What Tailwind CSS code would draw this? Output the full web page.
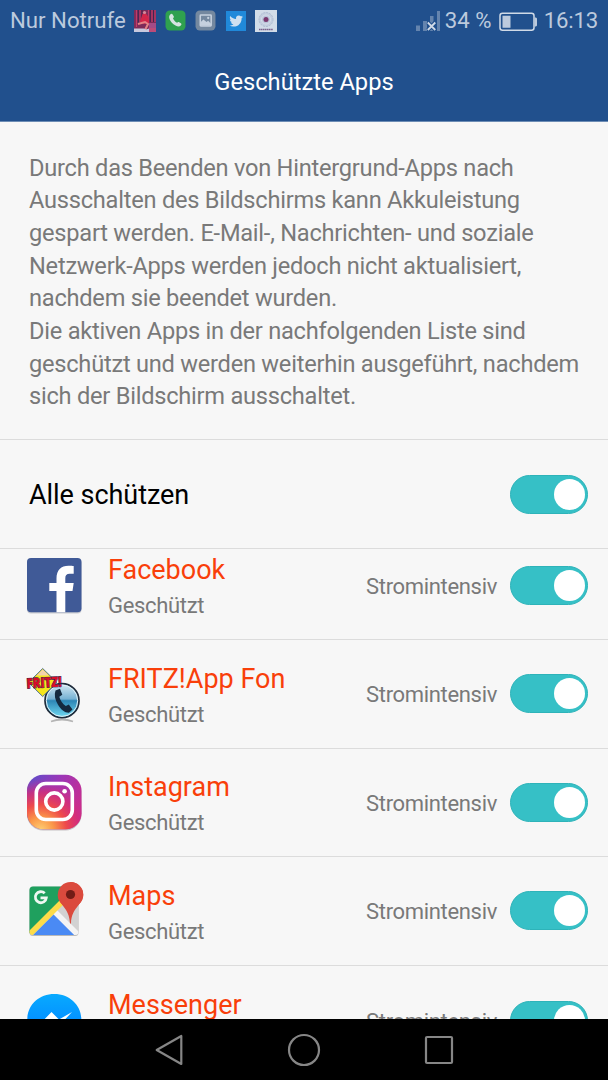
<!DOCTYPE html>
<html lang="de">
<head>
    <meta charset="UTF-8">
    <meta name="viewport" content="width=device-width, initial-scale=1.0">
    <title>Geschützte Apps</title>
    <script src="https://cdn.jsdelivr.net/npm/@tailwindcss/browser@4"></script>
</head>
<body class="font-[Roboto,sans-serif] bg-[#f7f7f7] w-[608px] h-[1080px] overflow-hidden flex flex-col">
    <!-- Header -->
    <header class="h-[122px] shrink-0 bg-[#21508d] border-b border-[#6d8db5]">
        <div class="h-[41px] pl-[10px] pr-[10px] flex items-center text-[22.2px] text-[#bccadd] whitespace-nowrap">
            <span class="w-[124px] pt-px">Nur Notrufe</span>
            <div class="flex items-center gap-[9px]">
                <svg class="w-[22px] h-[22px]" viewBox="0 0 22 22">
                    <path fill="#7d2b59" d="M0 0h22v22H0z"/>
                    <path stroke="#c23a69" stroke-width="1.2" d="M2.5 0v17M6 0v12M14.5 0v12M18 0v12M21 0v12"/>
                    <path stroke="#41264f" stroke-width="1" d="M4.3 0v13M8 0v8M16.3 0v12M19.5 0v12"/>
                    <path fill="#d4264a" d="M8.500 4l3-1 3 4 .5 6-6 1-3-2z"/>
                    <circle cx="10.500" cy="2.500" r="1.600" fill="#d8899a"/>
                    <path fill="none" stroke="#e58386" stroke-width="2" d="M4 14l7-2 3 2-3 6"/>
                    <path fill="#a34b86" d="M15 13h7v5h-7z"/>
                    <path fill="#c8c9de" d="M0 18.500h10l2 1 3-1v3.500H0z"/>
                    <path fill="#bb4b79" d="M15 18h7v4h-7z"/>
                </svg>
                <svg class="w-[21px] h-[21px]" viewBox="0 0 20 20">
                    <rect x=".5" y=".5" width="19" height="19" rx="4" fill="#2fa14f"/>
                    <path fill="#d5e4e1" d="M5 4.200c1-.9 1.700-.7 2.300.2l1 1.600c.4.800.1 1.300-.7 1.900.6 1.800 2 3.300 3.900 4.300.7-.8 1.200-1 2-.5l1.600 1c.8.600.8 1.300-.1 2.100-1.200 1.200-3 1-5-.1-2.700-1.500-4.700-3.700-5.600-6-.7-1.900-.6-3.400.6-4.500z"/>
                </svg>
                <svg class="w-[21px] h-[21px]" viewBox="0 0 20 20">
                    <rect x=".5" y=".5" width="19" height="19" rx="4" fill="#74889f"/>
                    <rect x="5" y="4.800" width="10.400" height="10.400" rx=".6" fill="none" stroke="#c5d0de" stroke-width="1.500"/>
                    <path fill="#c5d0de" d="M5 12l3-3 3 2.500 1.500-1.200 2.800 2.700v2H5z"/>
                    <circle cx="12.600" cy="7.600" r="1.100" fill="#c5d0de"/>
                </svg>
                <svg class="w-[20px] h-[20px] ml-px" viewBox="0 0 20 20">
                    <path fill="#2089da" d="M0 0h20v20H0z"/>
                    <path transform="translate(3.300 3.200) scale(.57)" fill="#cfe0f0" d="M23.950 4.570a10 10 0 01-2.820.770 4.960 4.960 0 002.160-2.720c-.95.550-2 .960-3.130 1.180a4.920 4.920 0 00-8.380 4.480C7.690 8.100 4.070 6.130 1.640 3.160a4.820 4.820 0 00-.67 2.480c0 1.710.87 3.210 2.190 4.100a4.900 4.900 0 01-2.230-.62v.06a4.920 4.920 0 003.950 4.830 5 5 0 01-2.210.080 4.940 4.940 0 004.600 3.420A9.870 9.870 0 010 19.540a13.990 13.990 0 007.550 2.210c9.050 0 14-7.500 14-13.980 0-.210 0-.420-.02-.630a9.940 9.940 0 002.460-2.550z"/>
                </svg>
                <svg class="w-[22px] h-[22px]" viewBox="0 0 22 22">
                    <path fill="#d2dce8" d="M0 0h22v22H0z"/>
                    <circle cx="11" cy="9.500" r="7" fill="#c3cedf" stroke="#aebbd0" stroke-dasharray="2 1"/>
                    <circle cx="11" cy="9.500" r="4.500" fill="#bac5d9" stroke="#d9e0eb"/>
                    <circle cx="11" cy="9.500" r="2.500" fill="#7b396f"/>
                    <path stroke="#79618b" stroke-width="1.600" stroke-dasharray="1.500 .4" d="M4 19.500h14"/>
                </svg>
            </div>
            <svg class="w-[26px] h-[24px] ml-auto -mt-[2px]" viewBox="0 0 26 24">
                <path fill="#6484ae" d="M1 17.500h4V23H1zM8 13h4v10H8zM15 8h3.500v15H15zM22 3h3v20h-3z"/>
                <path stroke="#21508d" stroke-width="4" d="M12.800 14.500l7.500 7.500M20.300 14.500l-7.500 7.500"/>
                <path stroke="#d0dae7" stroke-width="1.800" d="M12.800 14.500l7.500 7.500M20.300 14.500l-7.500 7.500"/>
            </svg>
            <span class="ml-[4px] w-[54px] pt-px">34 %</span>
            <svg class="w-[38px] h-[20px] mt-[2px]" viewBox="0 0 38 20">
                <rect x="1" y="1.200" width="34" height="17" rx="2.500" fill="none" stroke="#d0dae7" stroke-width="1.500"/>
                <path fill="#bccadd" d="M3.500 3.700h8v12h-8zM35.500 5.500H37l1 1v7l-1 1h-1.500z"/>
            </svg>
            <span class="ml-[7px] pt-px tracking-[-0.2px]">16:13</span>
        </div>
        <h1 class="h-20 flex items-center justify-center text-[23.7px] text-white pt-[3px]">Geschützte Apps</h1>
    </header>

    <!-- Description -->
    <p class="h-[318px] shrink-0 pt-[29.500px] pl-[29px] text-[23.64px] leading-[32.7px] tracking-[-0.245px] text-[#797979] whitespace-nowrap border-b border-[#dcdcdc]">
        Durch das Beenden von Hintergrund-Apps nach<br>
        Ausschalten des Bildschirms kann Akkuleistung<br>
        gespart werden. E-Mail-, Nachrichten- und soziale<br>
        Netzwerk-Apps werden jedoch nicht aktualisiert,<br>
        nachdem sie beendet wurden.<br>
        Die aktiven Apps in der nachfolgenden Liste sind<br>
        geschützt und werden weiterhin ausgeführt, nachdem<br>
        sich der Bildschirm ausschaltet.
    </p>

    <!-- Protect all -->
    <div class="h-[109px] shrink-0 pl-[29px] pr-5 flex items-center justify-between border-b border-[#dcdcdc]">
        <span class="text-[27px] text-black pt-[3px] tracking-[-0.05px]">Alle schützen</span>
        <div class="w-[78px] h-[39px] rounded-full bg-[#36c0c6] border border-[#2eb3b9] flex items-center justify-end pr-[2.500px]">
            <div class="w-[31px] h-[31px] rounded-full bg-white"></div>
        </div>
    </div>

    <!-- App list, scrolled a little -->
    <main class="h-[470px] shrink-0 overflow-hidden">
        <div class="-mt-[17.600px]">
            <div class="h-[108.600px] pl-6 pr-5 flex items-center border-b border-[#dcdcdc]">
                <svg class="w-[60px] h-[60px]" viewBox="0 0 60 60">
                    <rect x="3" y="4" width="54.500" height="54.500" rx="4" fill="#c9cbd0"/>
                    <rect x="3" y="3" width="54.500" height="54.300" rx="4" fill="#405a97"/>
                    <path fill="#fff" d="M32.500 57.300V36h-7.200v-8h7.200v-4.500c0-8.500 4.500-12.800 12-12.800 2.300 0 4.300.2 5.200.4v7.600h-4c-3.200 0-4.400 1.700-4.400 4.500V28h8.400l-1.200 8h-7.200v21.300z"/>
                </svg>
                <div class="ml-6 pt-[6px]">
                    <div class="text-[27px] leading-[36px] text-[#f93f0a]">Facebook</div>
                    <div class="text-[22px] leading-[36px] tracking-[-0.33px] text-[#797979]">Geschützt</div>
                </div>
                <span class="ml-auto mr-[13px] pt-[2px] text-[22px] tracking-[-0.33px] text-[#797979]">Stromintensiv</span>
                <div class="w-[78px] h-[39px] rounded-full bg-[#36c0c6] border border-[#2eb3b9] flex items-center justify-end pr-[2.500px]">
                    <div class="w-[31px] h-[31px] rounded-full bg-white"></div>
                </div>
            </div>

            <div class="h-[108.600px] pl-6 pr-5 flex items-center border-b border-[#dcdcdc]">
                <svg class="w-[60px] h-[60px]" viewBox="0 0 60 60">
                    <defs>
                        <linearGradient id="fon" x1="0" y1="0" x2="0" y2="1">
                            <stop offset="0" stop-color="#d7eaf4"/>
                            <stop offset=".45" stop-color="#76b1d3"/>
                            <stop offset=".5" stop-color="#2d86b6"/>
                            <stop offset="1" stop-color="#72dcf3"/>
                        </linearGradient>
                    </defs>
                    <path fill="none" stroke="#b5b5b5" stroke-width="1.800" d="M27 57.500q11-4 22 0"/>
                    <circle cx="38" cy="36.700" r="17" fill="url(#fon)" stroke="#202c3b" stroke-width="1.700"/>
                    <circle cx="38" cy="36.700" r="15.700" fill="none" stroke="#e2f2f8" stroke-width="1"/>
                    <path fill="#14293f" d="M31.500 26.500l4.500-1.700 2.300 6-3 2c1 4 3.300 7 6.500 9.200l3-1.500 3.700 5-3.500 3.300c-4 .2-8-3-11-8-3-5-4-10-2.500-14.300z"/>
                    <path fill="#f5e51b" stroke="#4d6f91" stroke-width="1" d="M18.700 4.500L33 18.500 18.700 32.500 4.500 18.500z"/>
                    <path fill="#f3d2ad" d="M18.700 5.500l6 6h-12z"/>
                    <text x="2.500" y="23.500" textLength="35" lengthAdjust="spacingAndGlyphs" transform="rotate(-3 20 19)" font-family="Open Sans" font-weight="800" font-size="14" fill="#d70d28" stroke="#2c2750" stroke-width="1" paint-order="stroke">FRITZ!</text>
                </svg>
                <div class="ml-6 pt-[6px]">
                    <div class="text-[27px] leading-[36px] text-[#f93f0a]">FRITZ!App Fon</div>
                    <div class="text-[22px] leading-[36px] tracking-[-0.33px] text-[#797979]">Geschützt</div>
                </div>
                <span class="ml-auto mr-[13px] pt-[2px] text-[22px] tracking-[-0.33px] text-[#797979]">Stromintensiv</span>
                <div class="w-[78px] h-[39px] rounded-full bg-[#36c0c6] border border-[#2eb3b9] flex items-center justify-end pr-[2.500px]">
                    <div class="w-[31px] h-[31px] rounded-full bg-white"></div>
                </div>
            </div>

            <div class="h-[108.600px] pl-6 pr-5 flex items-center border-b border-[#dcdcdc]">
                <svg class="w-[60px] h-[60px]" viewBox="0 0 60 60">
                    <defs>
                        <linearGradient id="instaTop" x1="0" y1="0" x2="1" y2=".5">
                            <stop offset="0" stop-color="#5750cb"/>
                            <stop offset=".5" stop-color="#9a37b8"/>
                            <stop offset="1" stop-color="#c82d91"/>
                        </linearGradient>
                        <radialGradient id="instaGlow" cx=".25" cy="1.020" r=".95">
                            <stop offset="0" stop-color="#fed074"/>
                            <stop offset=".25" stop-color="#fb9849"/>
                            <stop offset=".5" stop-color="#ee4a4b"/>
                            <stop offset=".75" stop-color="#d62c77" stop-opacity=".8"/>
                            <stop offset="1" stop-color="#c22f98" stop-opacity="0"/>
                        </radialGradient>
                    </defs>
                    <rect x="3" y="4" width="54.500" height="54.500" rx="16" fill="#c5c1c4"/>
                    <rect x="3" y="2.700" width="54.500" height="54.500" rx="16" fill="url(#instaTop)"/>
                    <rect x="3" y="2.700" width="54.500" height="54.500" rx="16" fill="url(#instaGlow)"/>
                    <g fill="none" stroke="#fff" stroke-width="3.600">
                        <rect x="12.300" y="11.500" width="36" height="36" rx="9.500"/>
                        <circle cx="30.300" cy="29.500" r="8.600"/>
                    </g>
                    <circle cx="40.600" cy="19.300" r="2.300" fill="#fff"/>
                </svg>
                <div class="ml-6 pt-[6px]">
                    <div class="text-[27px] leading-[36px] text-[#f93f0a]">Instagram</div>
                    <div class="text-[22px] leading-[36px] tracking-[-0.33px] text-[#797979]">Geschützt</div>
                </div>
                <span class="ml-auto mr-[13px] pt-[2px] text-[22px] tracking-[-0.33px] text-[#797979]">Stromintensiv</span>
                <div class="w-[78px] h-[39px] rounded-full bg-[#36c0c6] border border-[#2eb3b9] flex items-center justify-end pr-[2.500px]">
                    <div class="w-[31px] h-[31px] rounded-full bg-white"></div>
                </div>
            </div>

            <div class="h-[108.600px] pl-6 pr-5 flex items-center border-b border-[#dcdcdc]">
                <svg class="w-[60px] h-[60px]" viewBox="0 0 60 60">
                    <defs>
                        <clipPath id="map"><rect x="5.500" y="5.500" width="49" height="48.500" rx="3.500"/></clipPath>
                    </defs>
                    <rect x="5.500" y="6.500" width="49" height="48.500" rx="3.500" fill="#b9b9b9"/>
                    <g clip-path="url(#map)">
                        <path fill="#d2d2d2" d="M5 5h50v50H5z"/>
                        <path fill="#1fa05e" d="M5 5h49L5 54z"/>
                        <path fill="#4a8af4" d="M8 55l22-22 22 22z"/>
                        <path stroke="#f4f4f4" stroke-width="5.500" d="M30 30l26 26"/>
                        <path stroke="#fddc49" stroke-width="5.500" d="M5 54l36-36"/>
                    </g>
                    <path fill="none" stroke="#eef8f2" stroke-width="2.800" d="M20.700 12.300a5.500 5.500 0 101.600 4.500h-5.800"/>
                    <path fill="#db4a3d" d="M46.500 1A12.700 12.700 0 0133.800 13.700C33.800 23.500 45.500 26 46 42.500h1C47.500 26 59.300 23.500 59.300 13.700A12.700 12.700 0 0046.500 1z"/>
                    <circle cx="46.500" cy="13.700" r="12.700" fill="#db4a3d"/>
                    <circle cx="46.500" cy="13.500" r="4.600" fill="#721c16"/>
                </svg>
                <div class="ml-6 pt-[6px]">
                    <div class="text-[27px] leading-[36px] text-[#f93f0a]">Maps</div>
                    <div class="text-[22px] leading-[36px] tracking-[-0.33px] text-[#797979]">Geschützt</div>
                </div>
                <span class="ml-auto mr-[13px] pt-[2px] text-[22px] tracking-[-0.33px] text-[#797979]">Stromintensiv</span>
                <div class="w-[78px] h-[39px] rounded-full bg-[#36c0c6] border border-[#2eb3b9] flex items-center justify-end pr-[2.500px]">
                    <div class="w-[31px] h-[31px] rounded-full bg-white"></div>
                </div>
            </div>

            <div class="h-[108.600px] pl-6 pr-5 flex items-center">
                <svg class="w-[60px] h-[60px]" viewBox="0 0 60 60">
                    <defs>
                        <linearGradient id="msg" x1="0" y1="0" x2="0" y2="1">
                            <stop offset="0" stop-color="#08aaff"/>
                            <stop offset="1" stop-color="#0078ff"/>
                        </linearGradient>
                    </defs>
                    <path fill="url(#msg)" d="M30.300 4C15 4 3.300 15 3.300 29.500c0 8 3.700 14.500 9.200 19V58l8.500-5c3 .8 6 1.200 9.300 1.200 15 0 27-11 27-25S45.500 4 30.300 4z"/>
                    <path fill="#fff" d="M12.500 37.500l15-15.500 7.500 7.500L48 22 33.500 37.500l-7.300-7.500z"/>
                </svg>
                <div class="ml-6 pt-[5px]">
                    <div class="text-[27px] leading-[36px] text-[#f93f0a]">Messenger</div>
                    <div class="text-[22px] leading-[36px] tracking-[-0.33px] text-[#797979]">Geschützt</div>
                </div>
                <span class="ml-auto mr-[13px] pt-[2px] text-[22px] tracking-[-0.33px] text-[#797979]">Stromintensiv</span>
                <div class="w-[78px] h-[39px] rounded-full bg-[#36c0c6] border border-[#2eb3b9] flex items-center justify-end pr-[2.500px]">
                    <div class="w-[31px] h-[31px] rounded-full bg-white"></div>
                </div>
            </div>
        </div>
    </main>

    <!-- Navigation bar -->
    <nav class="h-[61px] shrink-0 bg-black flex items-center justify-center gap-[99px]">
        <svg class="w-9 h-9" viewBox="0 0 36 36" fill="none" stroke="#868686" stroke-width="2.200" stroke-linejoin="round">
            <path d="M30.300 4v28L5.700 18z"/>
        </svg>
        <svg class="w-9 h-9" viewBox="0 0 36 36" fill="none" stroke="#868686" stroke-width="2.200">
            <circle cx="18" cy="18" r="15"/>
        </svg>
        <svg class="w-9 h-9" viewBox="0 0 36 36" fill="none" stroke="#868686" stroke-width="2.200">
            <rect x="5" y="5" width="26" height="26" rx="1"/>
        </svg>
    </nav>
</body>
</html>
